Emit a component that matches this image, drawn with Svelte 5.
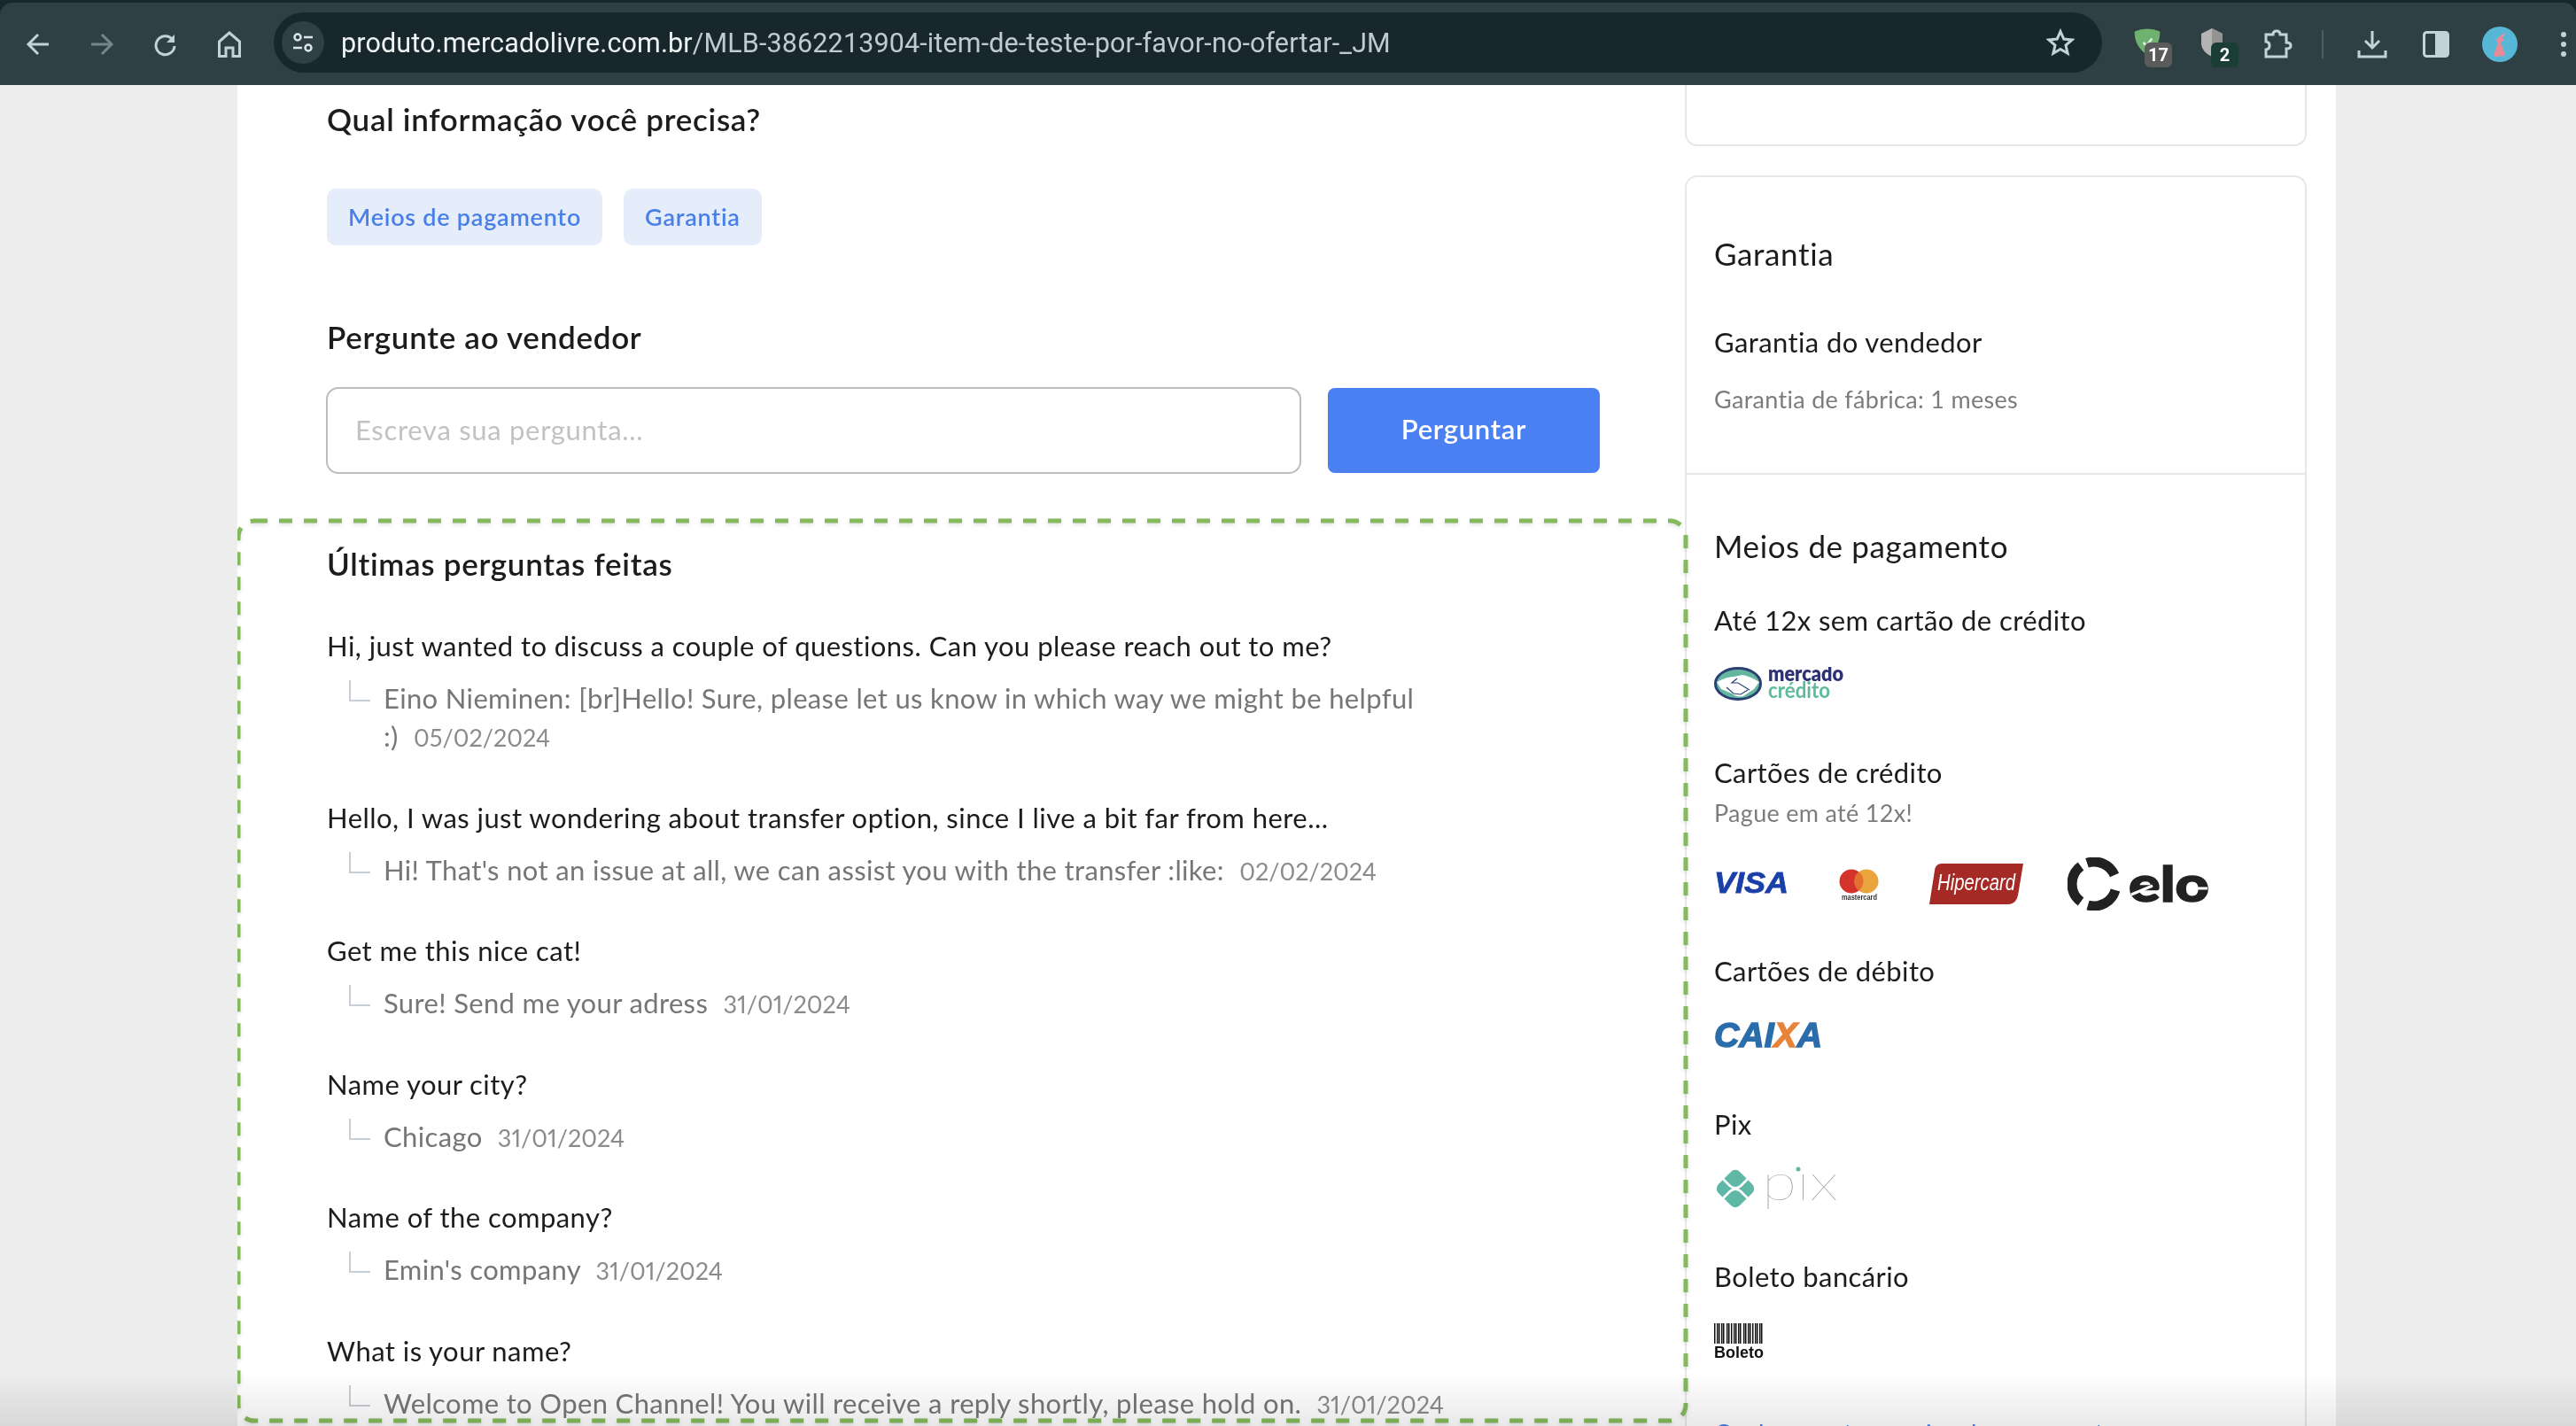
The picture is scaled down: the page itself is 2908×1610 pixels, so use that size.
<script>
  const questions = [
    { q: 'Hi, just wanted to discuss a couple of questions. Can you please reach out to me?', a: 'Eino Nieminen: [br]Hello! Sure, please let us know in which way we might be helpful\n:)', d: '05/02/2024' },
    { q: 'Hello, I was just wondering about transfer option, since I live a bit far from here...', a: "Hi! That's not an issue at all, we can assist you with the transfer :like:", d: '02/02/2024' },
    { q: 'Get me this nice cat!', a: 'Sure! Send me your adress', d: '31/01/2024' },
    { q: 'Name your city?', a: 'Chicago', d: '31/01/2024' },
    { q: 'Name of the company?', a: "Emin's company", d: '31/01/2024' },
    { q: 'What is your name?', a: 'Welcome to Open Channel! You will receive a reply shortly, please hold on.', d: '31/01/2024' }
  ];

  // barcode stripes: [x, width]
  const bars = [0, 3, 5, 8, 10, 14, 16, 19, 22, 24, 27, 29, 33, 35, 38, 40, 43, 46, 48, 51, 53];
</script>

<div class="browser">
  <header class="chrome">
    <div class="toolbar">
      <button class="tb first" aria-label="Voltar">
        <svg width="28" height="28" viewBox="0 0 28 28"><path d="M26 14H4M14 3 3 14l11 11" /></svg>
      </button>
      <button class="tb dim" aria-label="Avançar">
        <svg width="28" height="28" viewBox="0 0 28 28"><path d="M2 14h22M14 3l11 11-11 11" /></svg>
      </button>
      <button class="tb" aria-label="Recarregar">
        <svg width="28" height="28" viewBox="0 0 28 28"><path d="M22 9a10.500 10.500 0 1 0 2 7" /><path class="solid" d="M24 3v9h-9z" /></svg>
      </button>
      <button class="tb" aria-label="Início">
        <svg width="28" height="30" viewBox="0 0 28 30"><path d="M2.500 12 14 2l11.500 10v16.500H18V19h-8v9.500H2.500z" /></svg>
      </button>

      <div class="omnibox">
        <span class="site-info">
          <svg width="26" height="26" viewBox="0 0 26 26"><circle cx="7" cy="7" r="3.500" /><path d="M14 7h10M2 19h10" /><circle cx="19" cy="19" r="3.500" /></svg>
        </span>
        <span class="url"><span class="host">produto.mercadolivre.com.br</span>/MLB-3862213904-item-de-teste-por-favor-no-ofertar-_JM</span>
        <svg class="star" width="32" height="32" viewBox="0 0 32 32"><path d="M16 3.500l3.800 8.600 9.200.9-7 6.100 2.100 9.100-8.100-4.800-8.100 4.800 2.100-9.100-7-6.100 9.200-.9z" /></svg>
      </div>

      <div class="ext">
        <svg class="ext-icon" width="32" height="32" viewBox="0 0 34 36"><path class="shield-green" d="M1 4q16-7 32 0 1 18-16 30Q0 22 1 4z" /><path class="tick" d="M12 18l4 4 7-9" /></svg>
        <span class="badge grey">17</span>
      </div>
      <div class="ext">
        <svg class="ext-icon" width="26" height="32" viewBox="0 0 26 32"><path class="shield-grey" d="M13 0l12 6v12q-2 9-12 14Q2 27 1 18V6z" /><path class="shield-dark" d="M13 0l12 6v12q-2 9-12 14z" /></svg>
        <span class="badge green">2</span>
      </div>
      <button class="tb puzzle" aria-label="Extensões">
        <svg width="34" height="34" viewBox="0 0 34 34"><path d="M3 6h8q0-4 4-4t4 4h7v9q5 0 5 3.500T26 22v9H3v-8q4-.5 4-4.500t-4-4.500z" /></svg>
      </button>
      <span class="sep"></span>
      <button class="tb" aria-label="Downloads">
        <svg width="34" height="34" viewBox="0 0 34 34"><path d="M17 2v19M9 13l8 8 8-8M2 24v7h30v-7" /></svg>
      </button>
      <button class="tb" aria-label="Painel lateral">
        <svg width="30" height="30" viewBox="0 0 30 30"><rect x="1.500" y="1.500" width="27" height="27" rx="3" /><path class="solid" d="M14 1.500h11.500a3 3 0 0 1 3 3v21a3 3 0 0 1-3 3H14z" /></svg>
      </button>
      <button class="tb" aria-label="Perfil">
        <svg class="avatar" width="40" height="40" viewBox="0 0 40 40"><circle cx="20" cy="20" r="20" fill="#56b8d6" /><path fill="#ea8a96" d="M19 12l8-6-4 7 2 2-4 3 3 7 2 8-13 1 2-8 3-6-2-5z" /></svg>
      </button>
      <button class="tb" aria-label="Menu">
        <svg width="8" height="30" viewBox="0 0 8 30"><circle class="solid" cx="4" cy="4" r="3" /><circle class="solid" cx="4" cy="15" r="3" /><circle class="solid" cx="4" cy="26" r="3" /></svg>
      </button>
    </div>
  </header>

  <div class="page">
    <main class="main">
      <div class="top">
        <h2>Qual informação você precisa?</h2>
        <div class="chips">
          <button class="chip">Meios de pagamento</button>
          <button class="chip">Garantia</button>
        </div>
        <h2 class="ask-title">Pergunte ao vendedor</h2>
        <form class="ask">
          <input placeholder="Escreva sua pergunta..." />
          <button type="button">Perguntar</button>
        </form>
      </div>

      <section class="questions">
        <svg class="outline" width="1640" height="1020">
          <rect x="1" y="0" width="1634" height="1016" rx="18" />
        </svg>
        <h2>Últimas perguntas feitas</h2>
        <ul>
          {#each questions as item}
            <li>
              <p class="q">{item.q}</p>
              <div class="answer">
                <span class="elbow"></span>
                <p>{item.a} <span class="date">{item.d}</span></p>
              </div>
            </li>
          {/each}
        </ul>
      </section>
    </main>

    <aside class="side">
      <div class="card stub"></div>
      <div class="card info">
        <section class="warranty">
          <h3>Garantia</h3>
          <h4 class="w-name">Garantia do vendedor</h4>
          <p class="small w-desc">Garantia de fábrica: 1 meses</p>
        </section>
        <section class="pay">
          <h3>Meios de pagamento</h3>

          <h4 class="p-first">Até 12x sem cartão de crédito</h4>
          <svg class="logo l-credito" width="150" height="40" viewBox="0 0 150 40">
            <ellipse cx="27" cy="19" rx="25.500" ry="17.500" fill="#63b7a0" stroke="#2b3f73" stroke-width="3" />
            <path fill="#fff" d="M3 17Q14 11 22 11L32 9Q42 11 51 17L45 25 33 33Q26 35 20 30L8 25z" />
            <path fill="none" stroke="#2b3f73" stroke-width="1.200" d="M14 23 22 30 30 31 38 26M26 13 20 18 27 18 40 26" />
            <text class="mc1" x="61" y="16" textLength="85" lengthAdjust="spacingAndGlyphs">mercado</text>
            <text class="mc2" x="61" y="35" textLength="70" lengthAdjust="spacingAndGlyphs">crédito</text>
          </svg>

          <h4 class="p-next">Cartões de crédito</h4>
          <p class="small p-sub">Pague em até 12x!</p>
          <div class="cards">
            <svg class="vs" width="86" height="28" viewBox="0 0 86 28"><text class="visa" x="0" y="26" textLength="84" lengthAdjust="spacingAndGlyphs">VISA</text></svg>
            <svg class="mc" width="46" height="36" viewBox="0 0 46 36">
              <circle cx="14" cy="14" r="13.500" fill="#d5322c" />
              <circle cx="31" cy="14" r="13.500" fill="#eba33b" />
              <path fill="#e2702f" d="M22.500 3.500a13.500 13.500 0 0 1 0 21 13.500 13.500 0 0 1 0-21z" />
              <text x="23" y="35" text-anchor="middle" textLength="40" lengthAdjust="spacingAndGlyphs">mastercard</text>
            </svg>
            <svg class="hiper" width="106" height="46" viewBox="0 0 106 46">
              <path fill="#a52a25" d="M10 0H106L100 36Q98 46 88 46H0L6 8Q7 0 14 0z" />
              <text x="53" y="30" text-anchor="middle" textLength="88" lengthAdjust="spacingAndGlyphs">Hipercard</text>
            </svg>
            <svg class="elo" width="160" height="60" viewBox="0 0 160 60">
              <g fill="none" stroke="#222" stroke-width="11">
                <path d="M15 50A25 25 0 0 1 15 10" />
                <path d="M22 6.300A25 25 0 0 1 53 20" />
                <path d="M54 37A25 25 0 0 1 23 54" />
              </g>
              <text x="69" y="50" textLength="91" lengthAdjust="spacingAndGlyphs">elo</text>
              <path fill="none" stroke="#fff" stroke-width="3" d="M72 42 96 32M138 35 158 35" />
            </svg>
          </div>

          <h4 class="p-debit">Cartões de débito</h4>
          <svg class="logo l-caixa" width="124" height="30" viewBox="0 0 124 30">
            <text class="caixa" x="0" y="28" textLength="122" lengthAdjust="spacingAndGlyphs">CAI<tspan fill="#e8833a" stroke="#e8833a">X</tspan>A</text>
          </svg>

          <h4 class="p-pix">Pix</h4>
          <svg class="logo l-pix" width="144" height="50" viewBox="0 0 144 50">
            <rect x="7" y="8" width="34" height="34" rx="7" transform="rotate(45 24 25)" fill="#5fb8a6" />
            <path fill="none" stroke="#fff" stroke-width="2.800" d="M7 11 18 22Q24 27 30 22L41 11M7 39 18 28Q24 23 30 28L41 39" />
            <text x="54" y="38" textLength="86" lengthAdjust="spacingAndGlyphs">pix</text>
            <circle cx="95" cy="3" r="2.500" fill="#5fb8a6" />
          </svg>

          <h4 class="p-boleto">Boleto bancário</h4>
          <svg class="logo l-boleto" width="58" height="44" viewBox="0 0 58 44">
            {#each bars as x}
              <rect {x} y="0" width="1.500" height="23" fill="#111" />
            {/each}
            <text x="0" y="39" textLength="56" lengthAdjust="spacingAndGlyphs">Boleto</text>
          </svg>

          <a class="more" href="#pagamento">Conheça outros meios de pagamento</a>
        </section>
      </div>
    </aside>
  </div>

  <div class="fade"></div>
</div>

<style>
  :global(body) {
    margin: 0;
    background: #ededed;
  }

  .browser {
    width: 2908px;
    height: 1610px;
    overflow: hidden;
    position: relative;
    font-family: Lato, "Open Sans", sans-serif;
    color: #1c1c1c;
  }

  h2, h3, h4, p, ul {
    margin: 0;
    padding: 0;
    list-style: none;
  }

  /* browser bar */
  .chrome {
    height: 96px;
    background: #18272b;
    padding-top: 3px;
    box-sizing: border-box;
  }
  .toolbar {
    height: 93px;
    background: #2f4044;
    border-top-left-radius: 14px;
    border-top-right-radius: 14px;
    display: flex;
    align-items: center;
  }
  .tb {
    flex: none;
    width: 72px;
    height: 60px;
    padding: 0;
    border: 0;
    background: none;
    display: flex;
    align-items: center;
    justify-content: center;
  }
  .tb.first {
    margin-left: 7px;
  }
  .tb.puzzle {
    margin-left: 2px;
  }
  .tb svg path, .tb svg rect {
    fill: none;
    stroke: #c3d2d8;
    stroke-width: 3;
  }
  .tb svg .solid {
    fill: #c3d2d8;
    stroke: none;
  }
  .tb.dim svg path {
    stroke: #74878c;
  }
  .tb svg.avatar path {
    fill: #ea8a96;
    stroke: none;
  }

  .omnibox {
    flex: none;
    width: 2064px;
    height: 68px;
    margin: -3px 15px 0 14px;
    border-radius: 34px;
    background: #18272b;
    display: flex;
    align-items: center;
    box-sizing: border-box;
    padding-left: 9px;
  }
  .site-info {
    width: 48px;
    height: 48px;
    border-radius: 50%;
    background: #2f4044;
    display: flex;
    align-items: center;
    justify-content: center;
    flex: none;
  }
  .site-info svg * {
    fill: none;
    stroke: #dbe4e8;
    stroke-width: 2.500;
  }
  .url {
    margin-left: 19px;
    flex: 1;
    font-family: Roboto, sans-serif;
    font-size: 30.500px;
    letter-spacing: 0.13px;
    color: #c0cbd0;
    white-space: nowrap;
  }
  .host {
    color: #eef2f4;
  }
  .star {
    margin-right: 31px;
    fill: none;
    stroke: #c3d2d8;
    stroke-width: 3;
  }

  .ext {
    flex: none;
    width: 72px;
    height: 60px;
    margin-right: 1px;
    position: relative;
    display: flex;
    justify-content: center;
  }
  .ext-icon {
    margin-top: 12px;
  }
  .shield-green {
    fill: #6fb26f;
  }
  .shield-grey {
    fill: #b4b4b4;
  }
  .shield-dark {
    fill: #939393;
  }
  .tick {
    fill: none;
    stroke: #dff0df;
    stroke-width: 3;
  }
  .badge {
    position: absolute;
    top: 28px;
    height: 28px;
    width: 31px;
    border-radius: 6px;
    color: #fff;
    font-family: Roboto, sans-serif;
    font-weight: 700;
    font-size: 20px;
    line-height: 28px;
    text-align: center;
  }
  .badge.grey {
    left: 33px;
    background: #5b5b5b;
  }
  .badge.green {
    left: 35px;
    background: #1a3e35;
  }
  .sep {
    flex: none;
    width: 2px;
    height: 32px;
    margin: 0 19px 0 13px;
    background: #4d5e62;
  }

  /* page */
  .page {
    margin-left: 268px;
    width: 2369px;
    height: 1514px;
    background: #fff;
    display: flex;
    overflow: hidden;
  }
  .main {
    flex: none;
    width: 1634px;
  }
  .top {
    padding: 18px 0 0 101px;
  }
  h2 {
    font-size: 35px;
    line-height: 40px;
    letter-spacing: 0.7px;
    font-weight: 600;
  }
  .chips {
    display: flex;
    gap: 24px;
    margin-top: 59px;
  }
  .chip {
    height: 64px;
    padding: 0 24px 2px;
    border: 0;
    border-radius: 10px;
    background: #e5edfb;
    color: #4a7fe8;
    font: 600 27px Lato, sans-serif;
    letter-spacing: 0.75px;
  }
  .ask-title {
    margin-top: 83px;
  }
  .ask {
    display: flex;
    align-items: center;
    gap: 30px;
    margin: 37px 0 0 -1px;
  }
  .ask input {
    width: 1101px;
    height: 98px;
    box-sizing: border-box;
    border: 2px solid #bdbdbd;
    border-radius: 14px;
    padding: 0 31px 2px;
    font: 31px Lato, sans-serif;
    letter-spacing: 0.7px;
    outline: none;
  }
  .ask input::placeholder {
    color: #c2c2c2;
  }
  .ask button {
    width: 307px;
    height: 96px;
    padding: 0 0 4px;
    border: 0;
    border-radius: 8px;
    background: #4a80f2;
    color: #fff;
    font: 600 31px Lato, sans-serif;
    letter-spacing: 0.7px;
  }

  .questions {
    position: relative;
    margin-top: 53px;
    padding: 28px 0 0 101px;
  }
  .outline {
    position: absolute;
    left: 0;
    top: 0;
    overflow: visible;
    pointer-events: none;
    filter: drop-shadow(0 2px 2px rgba(0, 0, 0, 0.12));
  }
  .outline rect {
    fill: none;
    stroke: #85b95c;
    stroke-width: 5;
    stroke-dasharray: 15 13;
  }
  .questions ul {
    margin-top: 55px;
    display: flex;
    flex-direction: column;
    gap: 50.500px;
  }
  .q {
    font-size: 31px;
    line-height: 36px;
    letter-spacing: 0.45px;
  }
  .answer {
    display: flex;
    margin-top: 20px;
    padding-left: 25px;
    color: #767676;
  }
  .answer p {
    font-size: 31px;
    line-height: 43px;
    letter-spacing: 0.35px;
    white-space: pre-line;
  }
  .elbow {
    flex: none;
    width: 22px;
    height: 22px;
    margin: 1px 15px 0 0;
    border-left: 2px solid #c8ced5;
    border-bottom: 2px solid #c8ced5;
  }
  .date {
    margin-left: 9px;
    font-size: 27px;
    font-variant-numeric: proportional-nums;
    letter-spacing: 0;
    color: #8b8b8b;
  }

  /* sidebar */
  .side {
    flex: none;
    width: 702px;
  }
  .card {
    box-sizing: border-box;
    border: 2px solid #e7e7e7;
    background: #fff;
  }
  .stub {
    height: 69px;
    border-top: 0;
    border-radius: 0 0 14px 14px;
  }
  .info {
    margin-top: 33px;
    border-radius: 14px 14px 0 0;
  }
  h3 {
    font-size: 35px;
    line-height: 40px;
    letter-spacing: 0.6px;
    font-weight: 400;
  }
  h4 {
    font-size: 31px;
    line-height: 36px;
    letter-spacing: 0.4px;
    font-weight: 400;
  }
  .small {
    font-size: 27px;
    line-height: 32px;
    letter-spacing: 0.3px;
    color: #7c7c7c;
  }
  .warranty {
    padding: 66px 31px 67px;
    border-bottom: 2px solid #e7e7e7;
  }
  .w-name {
    margin-top: 62px;
  }
  .w-desc {
    margin-top: 31px;
  }
  .pay {
    padding: 60px 31px 0;
  }
  .logo {
    display: block;
  }
  .p-first {
    margin-top: 46px;
  }
  .l-credito {
    margin-top: 35px;
  }
  .mc1 {
    font: 800 24px Lato, sans-serif;
    fill: #2d3277;
  }
  .mc2 {
    font: 700 25px Lato, sans-serif;
    fill: #5dbb9c;
  }
  .p-next {
    margin-top: 61px;
  }
  .p-sub {
    margin-top: 12px;
  }
  .cards {
    display: flex;
    align-items: center;
    margin-top: 34px;
    height: 60px;
  }
  .vs {
    margin-bottom: 4px;
  }
  .visa {
    font: italic 700 34px "Liberation Sans", sans-serif;
    fill: #1a3fa8;
    stroke: #1a3fa8;
    stroke-width: 0.8;
  }
  .mc {
    margin: 2px 0 0 55px;
  }
  .mc text {
    font: 700 9px "Liberation Sans", sans-serif;
    fill: #333;
  }
  .hiper {
    margin-left: 56px;
  }
  .hiper text {
    font: italic 400 25px "Liberation Sans", sans-serif;
    fill: #fff;
  }
  .elo {
    margin-left: 50px;
  }
  .elo text {
    font: 900 56px Lato, sans-serif;
    fill: #222;
    stroke: #222;
    stroke-width: 1.500;
  }
  .p-debit {
    margin-top: 50px;
  }
  .l-caixa {
    margin-top: 40px;
  }
  .caixa {
    font: italic 900 39px "Liberation Sans", sans-serif;
    fill: #2b6cab;
    stroke: #2b6cab;
    stroke-width: 1.500;
  }
  .p-pix {
    margin-top: 67px;
  }
  .l-pix {
    margin-top: 30px;
  }
  .l-pix text {
    font: 100 58px Lato, sans-serif;
    fill: #9a9a9a;
  }
  .p-boleto {
    margin-top: 56px;
  }
  .l-boleto {
    margin-top: 35px;
  }
  .l-boleto text {
    font: 700 19px "Liberation Sans", sans-serif;
    fill: #111;
  }
  .more {
    display: block;
    margin-top: 63px;
    color: #4a7fe8;
    font-size: 28px;
    line-height: 34px;
    text-decoration: none;
  }

  /* shadow of the window edge at the bottom */
  .fade {
    position: absolute;
    left: 0;
    right: 0;
    bottom: 0;
    height: 60px;
    background: linear-gradient(to bottom, #fff, #e9e9e9);
    mix-blend-mode: multiply;
    pointer-events: none;
  }
</style>
